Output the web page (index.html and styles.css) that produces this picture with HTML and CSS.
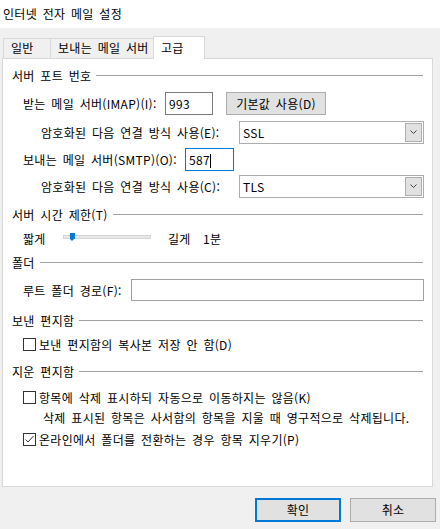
FILE: index.html
```html
<!DOCTYPE html>
<html lang="ko">
<head>
    <meta charset="UTF-8">
    <title>인터넷 전자 메일 설정</title>
    <link rel="stylesheet" href="styles.css">
</head>
<body>

<div class="titlebar">인터넷 전자 메일 설정</div>

<div class="tabs">
    <div class="tab tab-general">일반</div>
    <div class="tab tab-outgoing">보내는 메일 서버</div>
    <div class="tab tab-advanced active">고급</div>
</div>

<div class="panel">
    <div class="group-title"><span>서버 포트 번호</span></div>

    <div class="row row-imap">
        <span class="label label-imap">받는 메일 서버(IMAP)(I):</span>
        <div class="textbox port">993</div>
        <div class="button default-btn">기본값 사용(D)</div>
    </div>
    <div class="row sub row-enc1">
        <span class="label label-enc">암호화된 다음 연결 방식 사용(E):</span>
        <div class="combo">
            <span class="combo-value">SSL</span>
            <span class="combo-drop">
                <svg width="7" height="4" viewBox="0 0 7 4"><polyline points="0.5,0.5 3.5,3.5 6.5,0.5" fill="none" stroke="#444" stroke-width="1"/></svg>
            </span>
        </div>
    </div>
    <div class="row row-smtp">
        <span class="label label-smtp">보내는 메일 서버(SMTP)(O):</span>
        <div class="textbox port focused">587<span class="caret"></span></div>
    </div>
    <div class="row sub row-enc2">
        <span class="label label-enc">암호화된 다음 연결 방식 사용(C):</span>
        <div class="combo">
            <span class="combo-value">TLS</span>
            <span class="combo-drop">
                <svg width="7" height="4" viewBox="0 0 7 4"><polyline points="0.5,0.5 3.5,3.5 6.5,0.5" fill="none" stroke="#444" stroke-width="1"/></svg>
            </span>
        </div>
    </div>

    <div class="group-title gt-timeout"><span>서버 시간 제한(T)</span></div>
    <div class="row slider-row">
        <span class="label label-short">짧게</span>
        <div class="slider">
            <span class="thumb"></span>
        </div>
        <span class="label label-long">길게</span>
        <span class="label">1분</span>
    </div>

    <div class="group-title gt-folder"><span>폴더</span></div>
    <div class="row row-root">
        <span class="label label-root">루트 폴더 경로(F):</span>
        <div class="textbox root-path"></div>
    </div>

    <div class="group-title gt-sent"><span>보낸 편지함</span></div>
    <div class="row check-row cb-sent">
        <span class="checkbox"></span>
        <span class="label">보낸 편지함의 복사본 저장 안 함(D)</span>
    </div>

    <div class="group-title gt-deleted"><span>지운 편지함</span></div>
    <div class="row check-row cb-mark">
        <span class="checkbox"></span>
        <span class="label">항목에 삭제 표시하되 자동으로 이동하지는 않음(K)</span>
    </div>
    <div class="row note">삭제 표시된 항목은 사서함의 항목을 지울 때 영구적으로 삭제됩니다.</div>
    <div class="row check-row cb-purge">
        <span class="checkbox checked">
            <svg width="11" height="11" viewBox="0 0 11 11"><polyline points="1.5,5.5 4,8 9.5,2" fill="none" stroke="#333" stroke-width="1"/></svg>
        </span>
        <span class="label">온라인에서 폴더를 전환하는 경우 항목 지우기(P)</span>
    </div>
</div>

<div class="footer">
    <div class="button dlg-btn primary">확인</div>
    <div class="button dlg-btn">취소</div>
</div>

</body>
</html>
```

FILE: styles.css
```css
body {
    margin: 0;
    width: 440px;
    height: 529px;
    background-color: #f0f0f0;
    font-family: "Noto Sans CJK KR", "Noto Sans", sans-serif;
    font-size: 12px;
    letter-spacing: 0.3px;
    word-spacing: 2px;
    color: #000;
    overflow: hidden;
}

.titlebar {
    height: 28px;
    line-height: 28px;
    padding-left: 3px;
    background: #fff;
}

/* tabs */
.tabs {
    display: flex;
    align-items: flex-end;
    height: 22px;
    margin-top: 8px;
    padding-left: 3px;
}

.tab {
    box-sizing: border-box;
    height: 20px;
    line-height: 18px;
    padding-left: 7px;
    border: 1px solid #d9d9d9;
    border-bottom: none;
    background: #f0f0f0;
}

.tab-general {
    width: 48px;
}

.tab-outgoing {
    width: 103px;
    border-left: none;
}

.tab.active {
    position: relative;
    z-index: 1;
    width: 52px;
    height: 23px;
    line-height: 21px;
    margin-bottom: -1px;
    margin-left: -1px;
    background: #fff;
}

.panel {
    box-sizing: border-box;
    width: 431px;
    height: 429px;
    margin-left: 2px;
    padding: 6px 8px 0 9px;
    background: #fff;
    border: 1px solid #d9d9d9;
}

/* group headers */
.group-title {
    display: flex;
    align-items: center;
    height: 20px;
}

.group-title::after {
    content: "";
    flex: 1;
    height: 1px;
    margin: 0 1px 0 5px;
    background: #a0a0a0;
}

.gt-timeout { margin-top: 6px; }
.gt-folder { margin-top: 4px; }
.gt-sent { margin-top: 8px; }
.gt-deleted { margin-top: 7px; }

/* rows */
.row {
    display: flex;
    align-items: center;
    height: 24px;
    padding-left: 11px;
    white-space: nowrap;
}

.row.sub {
    padding-left: 29px;
}

.row-imap { margin-top: 6px; }
.row-enc1 { margin-top: 5px; }
.row-smtp { margin-top: 3px; }
.row-enc2 { margin-top: 3px; }
.row-root { margin-top: 6px; }

.label-imap { width: 142px; }
.label-enc { width: 198px; }
.label-smtp { width: 162px; }
.label-root { width: 108px; }
.label-short { width: 40px; }
.label-long { width: 35px; margin-left: 17px; }

.textbox {
    box-sizing: border-box;
    height: 23px;
    line-height: 21px;
    padding-left: 3px;
    background: #fff;
    border: 1px solid #7a7a7a;
}

.port {
    width: 48px;
}

.textbox.focused {
    width: 49px;
    border-color: #0078d7;
}

.caret {
    display: inline-block;
    width: 1px;
    height: 14px;
    vertical-align: -3px;
    background: #000;
}

.root-path {
    flex: 1;
    height: 22px;
    border-color: #a0a0a0;
}

.button {
    box-sizing: border-box;
    text-align: center;
    background: #e1e1e1;
    border: 1px solid #adadad;
}

.default-btn {
    width: 100px;
    height: 23px;
    line-height: 21px;
    margin-left: 13px;
}

/* combo box */
.combo {
    box-sizing: border-box;
    flex: 1;
    display: flex;
    height: 23px;
    padding: 1px;
    background: #fff;
    border: 1px solid #adadad;
}

.combo-value {
    flex: 1;
    line-height: 19px;
    padding-left: 2px;
}

.combo-drop {
    box-sizing: border-box;
    display: flex;
    align-items: center;
    justify-content: center;
    width: 17px;
    background: #e1e1e1;
    border: 1px solid #adadad;
}

/* slider */
.slider-row {
    height: 20px;
    margin-top: 4px;
}

.slider {
    position: relative;
    box-sizing: border-box;
    width: 88px;
    height: 4px;
    margin-top: -3px;
    background: #e7e7e7;
    border: 1px solid #d6d6d6;
}

.thumb {
    position: absolute;
    left: 6px;
    top: -3px;
    width: 5px;
    height: 6px;
    background: #0078d7;
}

.thumb::after {
    content: "";
    position: absolute;
    left: 0;
    top: 6px;
    border-left: 2.5px solid transparent;
    border-right: 2.5px solid transparent;
    border-top: 2px solid #0078d7;
}

/* checkboxes */
.check-row {
    height: 20px;
}

.cb-sent { margin-top: 4px; }
.cb-mark { margin-top: 6px; }
.cb-purge { margin-top: 2px; }

.checkbox {
    box-sizing: border-box;
    display: flex;
    align-items: center;
    justify-content: center;
    width: 13px;
    height: 13px;
    margin-right: 3px;
    background: #fff;
    border: 1px solid #333;
}

.note {
    height: 20px;
    padding-left: 31px;
}

/* dialog buttons */
.footer {
    display: flex;
    justify-content: flex-end;
    gap: 9px;
    margin-top: 11px;
    padding-right: 4px;
}

.dlg-btn {
    width: 86px;
    height: 24px;
    line-height: 22px;
}

.dlg-btn.primary {
    line-height: 20px;
    border: 2px solid #0078d7;
}
```
